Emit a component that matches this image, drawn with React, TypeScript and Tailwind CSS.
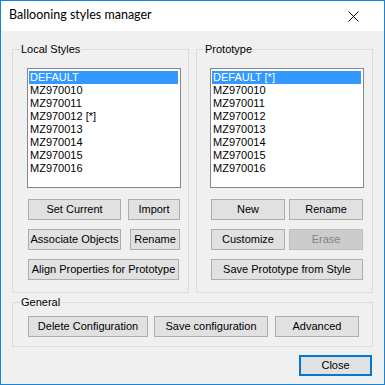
import React from "react";

const font = { fontFamily: '"Liberation Sans", Arial, sans-serif' };

function Btn({ w, label, disabled }: { w: string; label: string; disabled?: boolean }) {
  return (
    <div
      className={`${w} h-[21px] flex items-center justify-center border text-[11px] leading-none ${
        disabled ? "bg-[#cccccc] border-[#bfbfbf] text-[#838383]" : "bg-[#e1e1e1] border-[#adadad] text-black"
      }`}
    >
      {label}
    </div>
  );
}

function ListBox({ items, w }: { items: string[]; w: string }) {
  return (
    <div className={`${w} h-[120px] border border-[#828790] bg-white pt-[2px] pl-[1px] pr-[2px]`}>
      {items.map((it, i) => (
        <div
          key={it}
          className={`h-[13px] pl-[1px] text-[11px] leading-[13px] whitespace-nowrap ${
            i === 0 ? "bg-[#3399ff] text-white" : "text-black"
          }`}
        >
          {it}
        </div>
      ))}
    </div>
  );
}

function Group({ label, className, children }: { label: string; className: string; children: React.ReactNode }) {
  return (
    <div className={`relative border border-[#dcdcdc] ${className}`}>
      <div className="absolute -top-[7px] left-[7px] bg-[#f0f0f0] px-[1px] text-[11px] leading-[13px] text-black">
        {label}
      </div>
      {children}
    </div>
  );
}

export default function App() {
  const local = ["DEFAULT", "MZ970010", "MZ970011", "MZ970012 [*]", "MZ970013", "MZ970014", "MZ970015", "MZ970016"];
  const proto = ["DEFAULT [*]", "MZ970010", "MZ970011", "MZ970012", "MZ970013", "MZ970014", "MZ970015", "MZ970016"];
  return (
    <div style={font} className="w-[385px] h-[385px] border border-[#1883d7] flex flex-col bg-[#f0f0f0]">
      <div className="h-[30px] bg-white flex items-center justify-between pl-[8px] pr-[25px]">
        <span style={{ fontFamily: 'Lato, "Noto Sans", sans-serif' }} className="text-[12.5px] text-black leading-none pb-[1px]">
          Ballooning styles manager
        </span>
        <svg width="11" height="11" viewBox="0 0 11 11">
          <path d="M0.5 0.5 L10.5 10.5 M10.5 0.5 L0.5 10.5" stroke="#000" strokeWidth="1" />
        </svg>
      </div>
      <div className="flex-1 px-[11px] pt-[18px] flex flex-col">
        <div className="flex gap-[7px]">
          <Group label="Local Styles" className="w-[177px] h-[244px] pl-[14px] pt-[18px]">
            <ListBox items={local} w="w-[154px]" />
            <div className="mt-[11px] pl-[1px] flex flex-col gap-[9px]">
              <div className="flex gap-[7px]">
                <Btn w="w-[93px]" label="Set Current" />
                <Btn w="w-[52px]" label="Import" />
              </div>
              <div className="flex gap-[9px]">
                <Btn w="w-[93px]" label="Associate Objects" />
                <Btn w="w-[50px]" label="Rename" />
              </div>
              <Btn w="w-[151px]" label="Align Properties for Prototype" />
            </div>
          </Group>
          <Group label="Prototype" className="w-[177px] h-[244px] pl-[13px] pt-[18px]">
            <ListBox items={proto} w="w-[154px]" />
            <div className="mt-[11px] pl-[1px] flex flex-col gap-[9px]">
              <div className="flex gap-[4px]">
                <Btn w="w-[74px]" label="New" />
                <Btn w="w-[74px]" label="Rename" />
              </div>
              <div className="flex gap-[4px]">
                <Btn w="w-[74px]" label="Customize" />
                <Btn w="w-[74px]" label="Erase" disabled />
              </div>
              <Btn w="w-[152px]" label="Save Prototype from Style" />
            </div>
          </Group>
        </div>
        <Group label="General" className="mt-[9px] w-[361px] h-[45px] pl-[15px] pt-[13px]">
          <div className="flex">
            <Btn w="w-[120px]" label="Delete Configuration" />
            <div className="w-[6px]" />
            <Btn w="w-[114px]" label="Save configuration" />
            <div className="w-[7px]" />
            <Btn w="w-[84px]" label="Advanced" />
          </div>
        </Group>
        <div className="mt-[8px] flex justify-end pr-[1px]">
          <div className="w-[73px] h-[21px] border-2 border-[#0078d7] bg-[#e1e1e1] flex items-center justify-center text-[11px] leading-none text-black">
            Close
          </div>
        </div>
      </div>
    </div>
  );
}
